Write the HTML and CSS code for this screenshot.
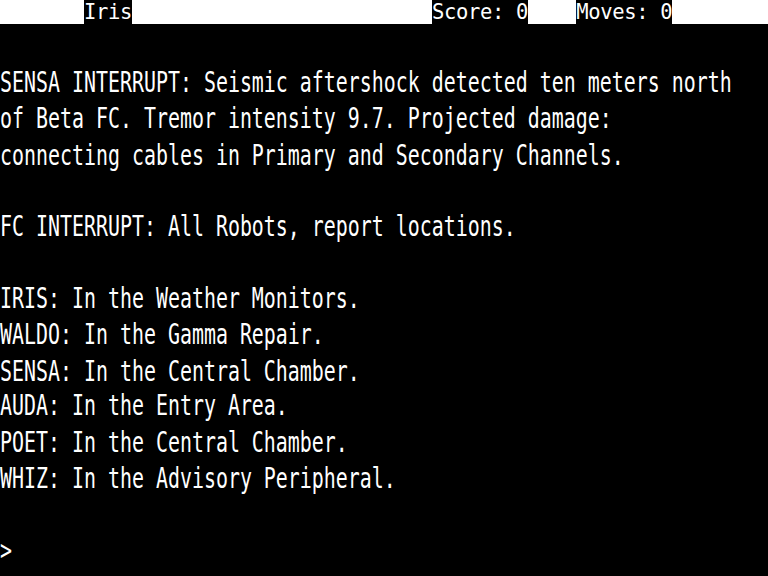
FILE: index.html
```html
<!DOCTYPE html>
<html>
<head>
<meta charset="utf-8">
<link rel="stylesheet" href="styles.css">
</head>
<body>
<div class="screen">
<div class="status">       <span class="rev">Iris</span>                         <span class="rev">Score: 0</span>    <span class="rev">Moves: 0</span></div>
<pre class="body">SENSA INTERRUPT: Seismic aftershock detected ten meters north
of Beta FC. Tremor intensity 9.7. Projected damage:
connecting cables in Primary and Secondary Channels.

FC INTERRUPT: All Robots, report locations.

IRIS: In the Weather Monitors.
WALDO: In the Gamma Repair.
SENSA: In the Central Chamber.
AUDA: In the Entry Area.
POET: In the Central Chamber.
WHIZ: In the Advisory Peripheral.

&gt;</pre>
</div>
</body>
</html>
```
FILE: styles.css
```css
html, body {
  margin: 0;
  padding: 0;
  background: #000;
}
.screen {
  width: 768px;
  height: 576px;
  overflow: hidden;
  background: #000;
  color: #fff;
  font-family: "DejaVu Sans Mono", monospace;
  font-size: 19.93px;
}
.status {
  height: 24px;
  background: #fff;
  white-space: pre;
  font-size: 20.5px;
  letter-spacing: -0.34px;
  line-height: 24px;
}
.rev {
  display: inline-block;
  vertical-align: top;
  height: 24px;
  line-height: 24px;
  background: #000;
  color: #fff;
}
.body {
  margin: 42px 0 0 0;
  font: inherit;
  line-height: 24.83px;
  transform: scaleY(1.45);
  transform-origin: 0 0;
}
```
